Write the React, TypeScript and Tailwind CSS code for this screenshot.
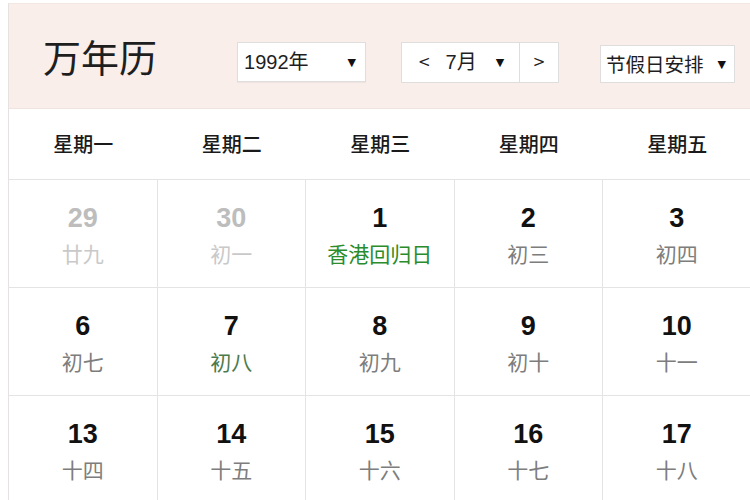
const weekdays = ['星期一', '星期二', '星期三', '星期四', '星期五']

type Day = {
  day: number
  lunar: string
  other?: boolean
  tone?: 'holiday' | 'term'
}

// only Mon-Fri fit in the visible area
const weeks: Day[][] = [
  [
    { day: 29, lunar: '廿九', other: true },
    { day: 30, lunar: '初一', other: true },
    { day: 1, lunar: '香港回归日', tone: 'holiday' },
    { day: 2, lunar: '初三' },
    { day: 3, lunar: '初四' },
  ],
  [
    { day: 6, lunar: '初七' },
    { day: 7, lunar: '初八', tone: 'term' },
    { day: 8, lunar: '初九' },
    { day: 9, lunar: '初十' },
    { day: 10, lunar: '十一' },
  ],
  [
    { day: 13, lunar: '十四' },
    { day: 14, lunar: '十五' },
    { day: 15, lunar: '十六' },
    { day: 16, lunar: '十七' },
    { day: 17, lunar: '十八' },
  ],
]

const cjk = "font-['Noto_Sans_CJK_SC',sans-serif]"

function Arrow() {
  return <span className="text-[11px] leading-none text-[#111] font-['DejaVu_Sans',sans-serif]">▼</span>
}

function DayCell({ entry }: { entry: Day }) {
  const numberColor = entry.other ? 'text-[#bdbdbd]' : 'text-[#111]'
  const lunarColor = entry.other
    ? 'text-[#c9c9c9]'
    : entry.tone === 'holiday'
      ? 'text-[#2a8c2a]'
      : entry.tone === 'term'
        ? 'text-[#4c7a4c]'
        : 'text-[#7d7d7d]'

  return (
    <div className="flex h-[108px] flex-col items-center border-r border-b border-[#e4e4e4] pt-[22px]">
      <span
        className={`font-['Liberation_Sans',Arial,sans-serif] text-[27px] font-bold leading-[32px] ${numberColor}`}
      >
        {entry.day}
      </span>
      <span className={`${cjk} mt-[6px] text-[21px] leading-[26px] ${lunarColor}`}>{entry.lunar}</span>
    </div>
  )
}

export default function App() {
  return (
    <div className="h-[500px] w-[750px] overflow-hidden bg-white pt-[3px] pl-2">
      <div className="w-[752px] border-l border-[#e6e2e1]">
        <header className="flex h-[105px] items-center border-t border-[#f3e6e3] bg-[#faeeeb] pl-[34px]">
          <h1 className={`${cjk} text-[38px] leading-none font-normal text-[#1e1e1e]`}>万年历</h1>

          <div className="mt-[12px] ml-[80px] flex h-[40px] w-[129px] items-center justify-between border border-[#dedede] bg-white pr-[9px] pl-[6px] shadow-[0_1px_1px_rgba(0,0,0,0.04)]">
            <span className={`font-['Liberation_Sans',Arial,'Noto_Sans_CJK_SC',sans-serif] text-[20px] text-[#1e1e1e]`}>
              1992年
            </span>
            <Arrow />
          </div>

          <div className="mt-[12px] ml-[35px] flex h-[41px] w-[158px] border border-[#dedede] bg-white">
            <div className="flex w-[118px] items-center border-r border-[#dedede] pl-[16px]">
              <span className="font-['DejaVu_Sans',sans-serif] text-[15px] text-[#222]">&lt;</span>
              <span
                className={`ml-[15px] font-['Liberation_Sans',Arial,'Noto_Sans_CJK_SC',sans-serif] text-[20px] text-[#1e1e1e]`}
              >
                7月
              </span>
              <span className="ml-[19px] flex">
                <Arrow />
              </span>
            </div>
            <div className="flex flex-1 items-center justify-center">
              <span className="font-['DejaVu_Sans',sans-serif] text-[15px] text-[#222]">&gt;</span>
            </div>
          </div>

          <div className="mt-[16px] ml-[41px] flex h-[38px] w-[135px] items-center justify-between border border-[#dedede] bg-white pr-[8px] pl-[5px]">
            <span className={`${cjk} text-[19.5px] leading-none text-[#1e1e1e]`}>节假日安排</span>
            <Arrow />
          </div>
        </header>

        <div className="grid grid-cols-[repeat(5,148.5px)] border-t border-[#f0e4e1]">
          {weekdays.map((name) => (
            <div
              key={name}
              className={`${cjk} flex h-[71px] items-center justify-center border-b border-[#e4e4e4] text-[20px] font-medium text-[#1a1a1a]`}
            >
              {name}
            </div>
          ))}
          {weeks.flat().map((entry, index) => (
            <DayCell key={index} entry={entry} />
          ))}
        </div>
      </div>
    </div>
  )
}
